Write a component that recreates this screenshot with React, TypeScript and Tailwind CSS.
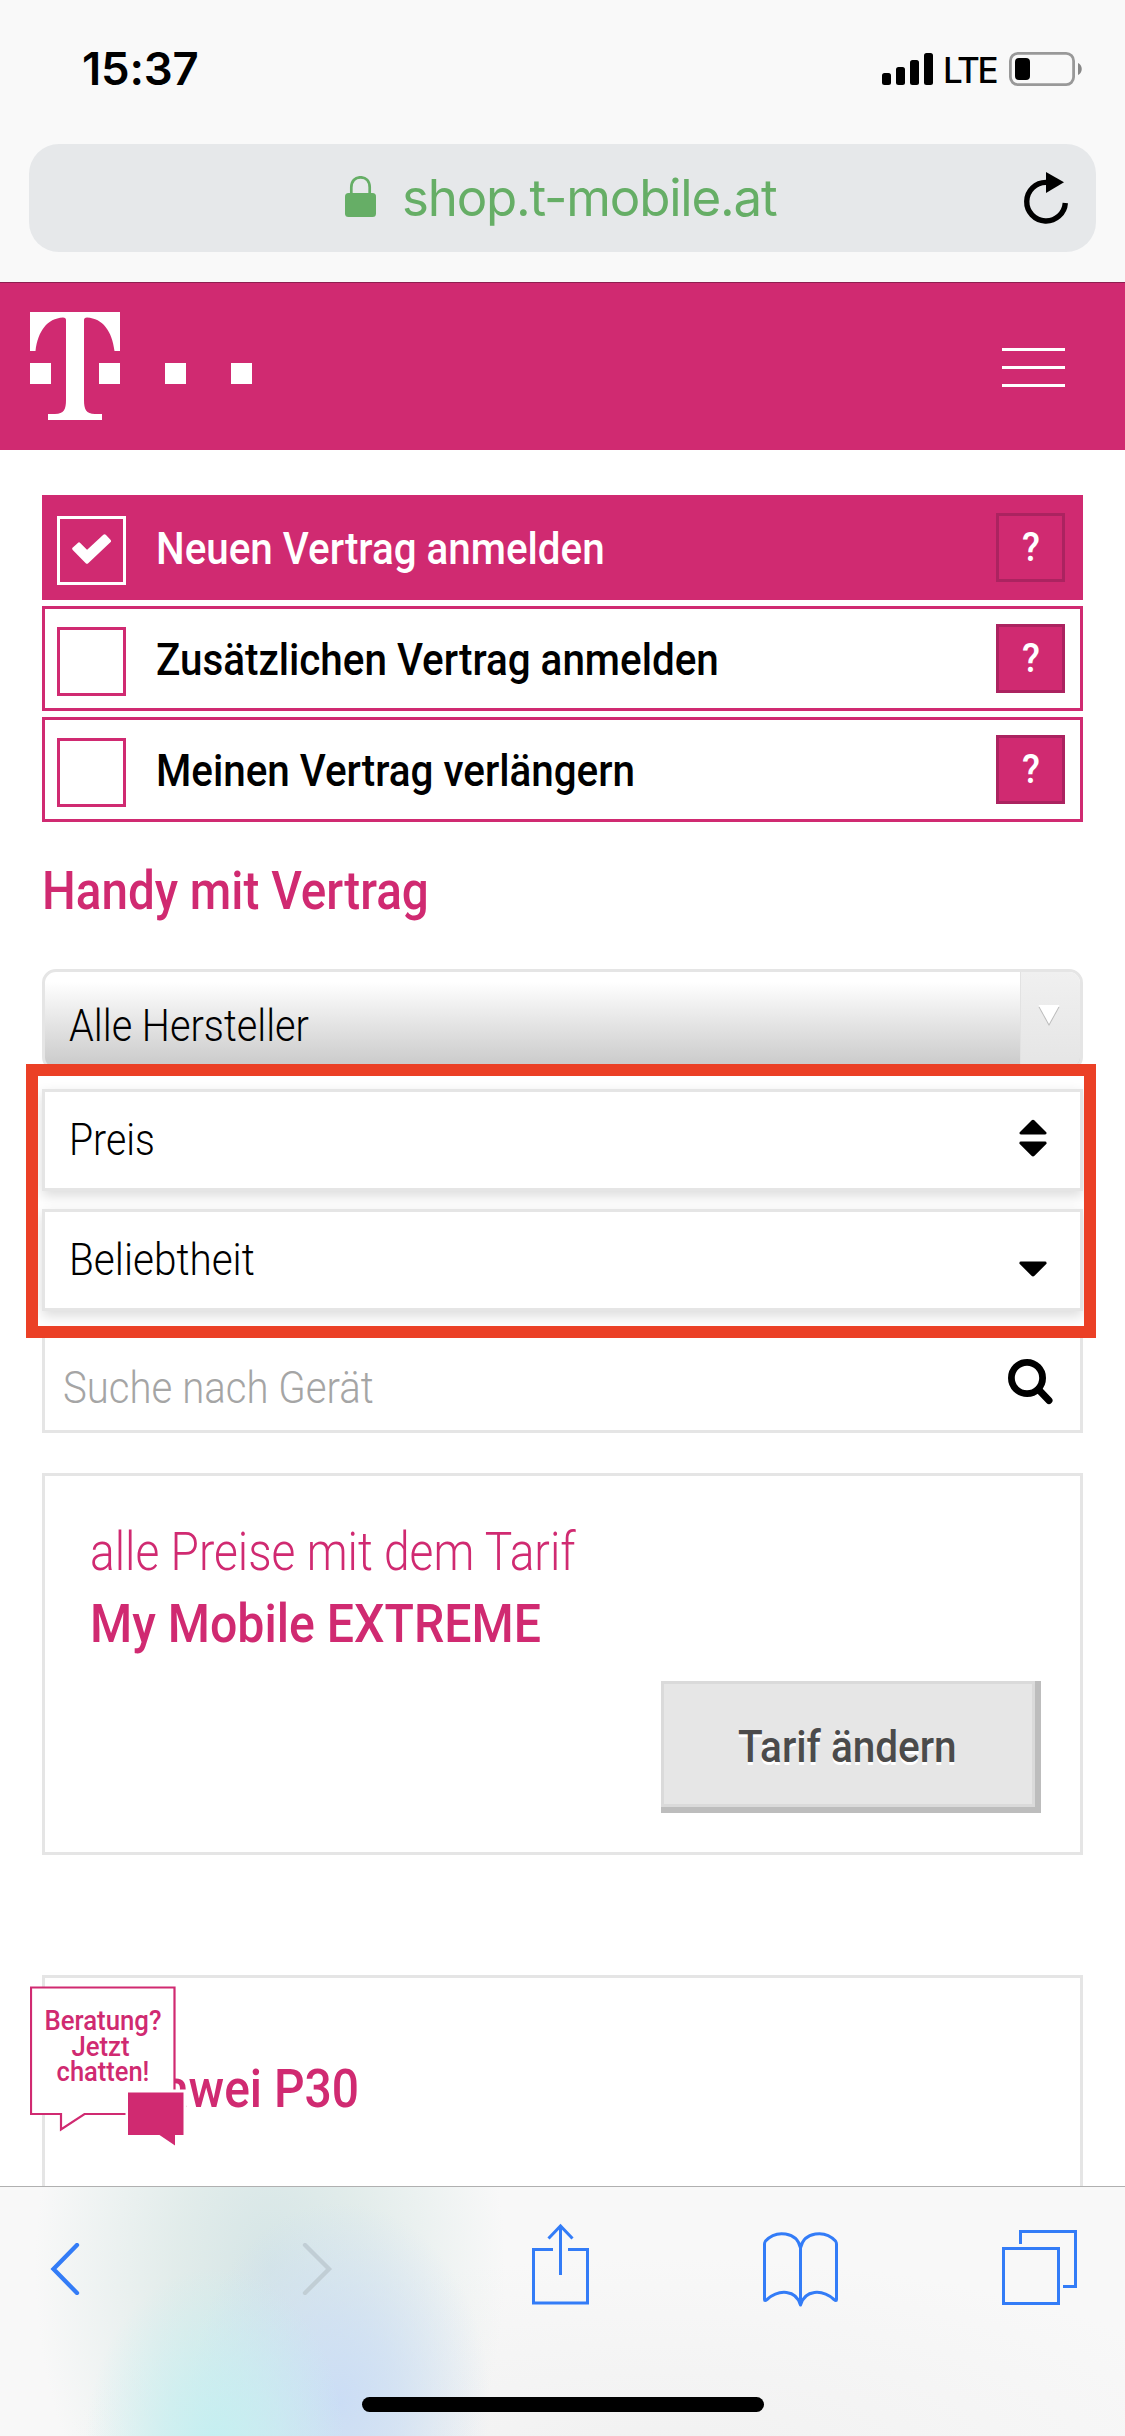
import React from "react";

function StatusBar() {
  return (
    <div className="flex h-36 items-start pt-[44px] pl-[82px] font-['Inter',sans-serif] text-black">
      <span className="w-[800px] text-[45.5px] leading-[50px] font-semibold tracking-[-0.2px]">15:37</span>
      <svg className="mt-[9px] h-8 w-[51px]" viewBox="0 0 51 32">
        <rect x="0" y="20" width="9" height="12" rx="2.5" />
        <rect x="14" y="14" width="9" height="18" rx="2.5" />
        <rect x="28" y="7" width="9" height="25" rx="2.5" />
        <rect x="42" y="0" width="9" height="32" rx="2.5" />
      </svg>
      <span className="mt-[5px] ml-[10px] w-[66px] text-[35px] leading-[42px] font-medium tracking-[-2.400px]">LTE</span>
      <svg className="mt-2 h-[34px] w-[74px]" viewBox="0 0 74 34">
        <rect x="1.4" y="1.4" width="63.2" height="31.2" rx="7.5" fill="none" stroke="#999" strokeWidth="2.8" />
        <rect x="6" y="6" width="15" height="22" rx="4" />
        <path d="M69 11c5 2 5 10 0 12z" fill="#888" />
      </svg>
    </div>
  );
}

function AddressBar() {
  return (
    <div className="mx-[29px] flex h-[108px] w-[1067px] rounded-[30px] bg-[#e6e8ea]">
      <svg className="mt-8 ml-[316px] h-[42px] w-[31px]" viewBox="0 0 31 42" fill="none">
        <path d="M6.3 20V11.500C6.300 5 10 1.300 15.500 1.300S24.700 5 24.700 11.500V20" stroke="#66ae66" strokeWidth="2.7" />
        <rect x="0" y="17" width="31" height="24" rx="3.500" fill="#66ae66" />
      </svg>
      <span className="mt-[24px] ml-[26px] w-[621px] font-['Inter',sans-serif] text-[51px] leading-[60px] tracking-[-1.2px] text-[#66ae66]">
        shop.t-mobile.at
      </span>
      <svg className="mt-7 h-[54px] w-[46px]" viewBox="0 0 46 54">
        <path d="M42.300 31A19.300 19.300 0 1 1 23 10.400" fill="none" stroke="#000" strokeWidth="5.4" />
        <path d="M23 0l18 10.300L23 21z" />
      </svg>
    </div>
  );
}

function SiteHeader() {
  return (
    <header className="flex h-[168px] shrink-0 border-t border-[#8d1f50] bg-[#d02a71]">
      <svg className="mt-[29px] ml-[30px] h-[108px] w-[222px]" viewBox="0 0 222 108" fill="#fff">
        <path d="M0 0H90V39H84.500C82 19 73 6.500 57 5.500Q54 5.500 54 8V88C54 97 56 102 65 102H72V108H18V102H25C34 102 36 97 36 88V8Q36 5.500 33 5.500C17 6.500 8 19 5.500 39H0Z" />
        <rect x="0" y="51" width="21" height="21" />
        <rect x="69" y="51" width="21" height="21" />
        <rect x="135" y="51" width="21" height="21" />
        <rect x="201" y="51" width="21" height="21" />
      </svg>
      <div className="mt-[65px] ml-[750px] flex h-[39px] w-[63px] flex-col justify-between">
        <div className="h-[3px] bg-white" />
        <div className="h-[3px] bg-white" />
        <div className="h-[3px] bg-white" />
      </div>
    </header>
  );
}

function Option({ label, checked }: { label: string; checked?: boolean }) {
  return (
    <div className={`flex h-[105px] border-[3px] border-[#d02a71] ${checked ? "bg-[#d02a71] text-white" : "bg-white text-black"}`}>
      <div className={`mt-[18px] ml-3 h-[69px] w-[69px] border-[3px] ${checked ? "border-white" : "border-[#d02a71]"}`}>
        {checked && (
          <svg className="mt-[15px] ml-3 h-[30px] w-[39px]" viewBox="0 0 39 30">
            <path d="M2 14.700L7 10.200L15 18.200L32.500 2L37.200 7L15 28Z" fill="#fff" stroke="#fff" strokeWidth="3.500" strokeLinejoin="round" />
          </svg>
        )}
      </div>
      <span className="mt-[27px] ml-[30px] w-[840px] origin-left scale-x-[0.897] text-[45px] leading-[48px] font-medium whitespace-nowrap">{label}</span>
      <div className="mt-[15px] flex h-[69px] w-[69px] justify-center border-[3px] border-[#ab2360] bg-[#d02a71] text-white">
        <span className="mt-[7px] scale-x-[0.9] text-[41px] leading-[48px] font-medium">?</span>
      </div>
    </div>
  );
}

function Caret({ up }: { up?: boolean }) {
  return (
    <svg className="h-4 w-7" viewBox="0 0 28 16">
      <path d={up ? "M12.500 1.500Q14 0 15.500 1.500L27.500 13.500Q28 15.500 26 15.500H2Q0 15.500 .5 13.500Z" : "M12.500 14.800Q14 16.300 15.500 14.800L27.500 2.700Q28 .6 26 .6H2Q0 .6 .5 2.700Z"} />
    </svg>
  );
}

function ChatBubble() {
  return (
    <div className="absolute top-[7px] left-[-15px] h-[170px] w-[160px]">
      <svg className="absolute inset-0 h-full w-full" viewBox="0 0 160 170">
        <path d="M1 2.500H144.500V129H54.500L31 144.500V129H1Z" fill="#fff" stroke="#d02a71" strokeWidth="2.2" />
        <path d="M95.500 104.500H156.500V153H95.500Z" fill="#fff" />
        <path d="M98 107.500H153.500V150H145V160.500L129.500 150H98Z" fill="#d02a71" />
      </svg>
      <div className="relative ml-[1px] w-[144px] pt-[23px] text-center text-[28px] leading-[25.500px] font-medium text-[#d02a71]">
        <div className="scale-x-[0.92]">Beratung?</div>
        <div className="mr-[5px] scale-x-[0.92]">Jetzt</div>
        <div className="scale-x-[0.91]">chatten!</div>
      </div>
    </div>
  );
}

function Toolbar() {
  return (
    <footer className="h-[250px] shrink-0 border-t border-[#b0b0b0] bg-[#f8f8f8] bg-[radial-gradient(ellipse_130px_180px_at_215px_260px,#c4eff1_0%,#c4eff1aa_40%,#c4eff100_100%),radial-gradient(ellipse_150px_200px_at_340px_215px,#cbddf5_0%,#cbddf5aa_40%,#cbddf500_100%),radial-gradient(ellipse_235px_360px_at_270px_80px,#d5e5e6_0%,#dce9e7cc_40%,#f8f8f800_100%),radial-gradient(ellipse_600px_200px_at_660px_270px,#f1f1f1_0%,#f8f8f800_100%)]">
      <div className="flex h-[210px] items-start">
        <svg className="mt-14 ml-[50px] h-[52px] w-[31px]" viewBox="0 0 31 52" fill="none">
          <path d="M27 2L3.500 26L27 50" stroke="#337cf7" strokeWidth="4.300" strokeLinecap="round" />
        </svg>
        <svg className="mt-14 ml-[221px] h-[52px] w-[31px]" viewBox="0 0 31 52" fill="none">
          <path d="M3 2L27 26L3 50" stroke="#c1ced5" strokeWidth="4.300" strokeLinecap="round" />
        </svg>
        <svg className="mt-[36px] ml-[199px] h-[82px] w-[57px]" viewBox="0 0 57 82" fill="none" stroke="#337cf7" strokeWidth="3">
          <path d="M21 26.500H1.500V80H55.500V26.500H36M28.500 52V4M16.500 15.500L28.500 3L40.500 15.500" />
        </svg>
        <svg className="mt-[45px] ml-[174px] h-[75px] w-[75px]" viewBox="0 0 75 75" fill="none" stroke="#337cf7" strokeWidth="3" strokeLinejoin="round">
          <path d="M37.500 16C34 -.5 13 -2.500 2.500 9Q1.500 10.500 1.500 12V67.500Q1.500 69.500 4 67.500C16 57 33 57.500 37.500 73C42 57.500 59 57 71 67.500Q73.500 69.500 73.500 67.500V12Q73.500 10.500 72.500 9C62 -2.500 41 -.5 37.500 16ZM37.500 16V73" />
        </svg>
        <svg className="mt-[43px] ml-[164px] h-[75px] w-[75px]" viewBox="0 0 75 75" fill="none" stroke="#337cf7" strokeWidth="3">
          <path d="M1.500 18.500H56.500V73.500H1.500ZM18.500 14V1.500H73.500V56.500H61" />
        </svg>
      </div>
      <div className="mx-auto h-[15px] w-[402px] rounded-full bg-black" />
    </footer>
  );
}

export default function App() {
  return (
    <div className="flex h-[2436px] w-[1125px] flex-col overflow-hidden bg-white font-['Roboto',sans-serif]">
      <div className="h-[282px] shrink-0 bg-[#f9f9f9]">
        <StatusBar />
        <AddressBar />
      </div>
      <SiteHeader />

      <main className="min-h-0 flex-1 overflow-hidden px-[42px] pt-[45px] text-black">
        <div className="flex flex-col gap-[6px]">
          <Option label="Neuen Vertrag anmelden" checked />
          <Option label="Zusätzlichen Vertrag anmelden" />
          <Option label="Meinen Vertrag verlängern" />
        </div>

        <h1 className="mt-[39px] h-[60px] origin-left scale-x-[0.898] text-[53px] leading-[60px] font-medium text-[#d02a71]">Handy mit Vertrag</h1>

        <section className="relative mt-12">
          <div className="flex h-[102px] overflow-hidden rounded-[14px] border-[3px] border-[#e5e5e5] bg-linear-to-b from-white from-10% to-[#c9c9c9]">
            <span className="mt-[30px] ml-[24px] w-[951px] origin-left scale-x-[0.882] text-[45px] leading-[48px] font-light">Alle Hersteller</span>
            <div className="h-full w-[60px] border-l border-[#e2e2e2] bg-linear-to-b from-[#f0f0f0] to-[#e5e5e5]">
              <svg className="mt-8 ml-[17px] h-[22px] w-[22px]" viewBox="0 0 22 22">
                <path d="M.5 3L11 22L21.500 3z" fill="#bbb" />
                <path d="M.5 1H21.500L11 20z" fill="#fff" />
              </svg>
            </div>
          </div>

          <div className="mt-[18px] flex h-[102px] border-[3px] border-[#e5e5e5] bg-white shadow-[0_5px_12px_rgba(0,0,0,0.14)]">
            <span className="mt-[24px] ml-[24px] w-[950px] origin-left scale-x-[0.87] text-[45px] leading-[48px] font-light">Preis</span>
            <div className="mt-[27px] flex h-[38px] flex-col justify-between">
              <Caret up />
              <Caret />
            </div>
          </div>

          <div className="mt-[18px] flex h-[102px] border-[3px] border-[#e5e5e5] bg-white shadow-[0_5px_12px_rgba(0,0,0,0.14)]">
            <span className="mt-[24px] ml-[24px] w-[950px] origin-left scale-x-[0.9] text-[45px] leading-[48px] font-light">Beliebtheit</span>
            <div className="mt-[49px]">
              <Caret />
            </div>
          </div>

          <div className="mt-[18px] flex h-[104px] border-[3px] border-[#e5e5e5]">
            <span className="mt-[32px] ml-[18px] w-[945px] origin-left scale-x-[0.892] text-[45px] leading-[48px] font-light text-[#a5a5a5]">Suche nach Gerät</span>
            <svg className="mt-[27px] h-[46px] w-[46px]" viewBox="0 0 46 46" fill="none" stroke="#000">
              <circle cx="19" cy="19" r="15.600" strokeWidth="6.800" />
              <path d="M30.500 30.500L41 41.500" strokeWidth="7" strokeLinecap="round" />
            </svg>
          </div>

          <div className="absolute top-[95px] left-[-16px] h-[274px] w-[1070px] border-[12px] border-[#eb4026]" />
        </section>

        <section className="mt-10 h-[382px] border-[3px] border-[#e5e5e5] pt-10 pl-[45px] text-[53px] leading-[72px] text-[#d02a71]">
          <div className="w-[800px] origin-left scale-x-[0.87] font-light">alle Preise mit dem Tarif</div>
          <div className="w-[800px] origin-left scale-x-[0.91] font-medium">My Mobile EXTREME</div>
          <div className="mt-[21px] ml-[571px] h-[132px] w-[380px] border-r-[6px] border-b-[6px] border-[#bdbdbd]">
            <div className="h-full border-[3px] border-[#dadada] bg-[#e6e6e6] pt-[39px] pl-[74px]">
              <span className="block origin-left scale-x-[0.9] text-[45px] leading-[48px] font-medium text-[#4b4b4b] [text-shadow:0_3px_0_#fff]">Tarif ändern</span>
            </div>
          </div>
        </section>

        <section className="relative mt-[120px] h-[300px] border-[3px] border-[#e5e5e5] pt-[75px] pl-[57px]">
          <h2 className="origin-left scale-x-[0.905] text-[53px] leading-[72px] font-medium text-[#d02a71]">Huawei P30</h2>
          <ChatBubble />
        </section>
      </main>

      <Toolbar />
    </div>
  );
}
